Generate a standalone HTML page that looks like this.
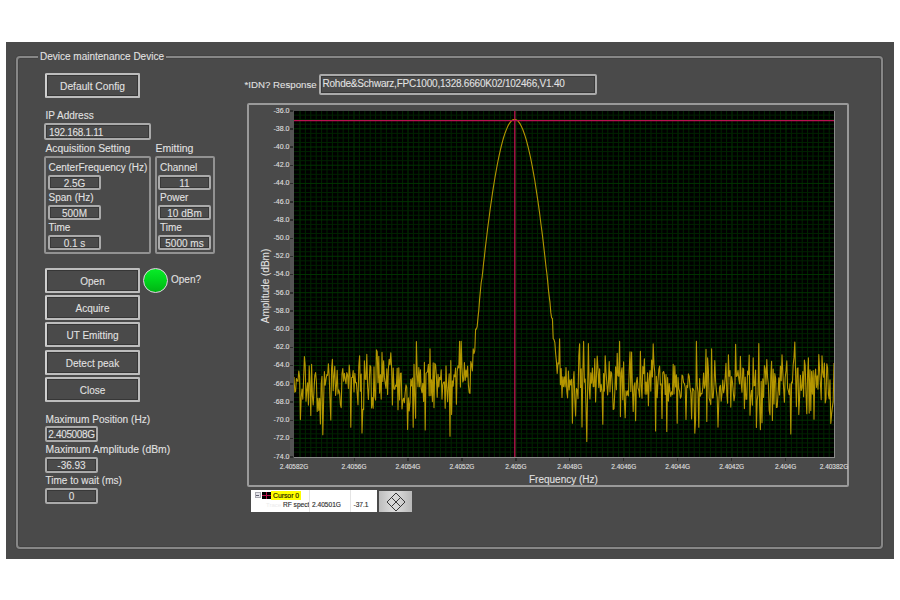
<!DOCTYPE html><html><head><meta charset="utf-8"><style>
*{margin:0;padding:0;box-sizing:border-box}
html,body{width:900px;height:600px;background:#fff;overflow:hidden;position:relative;font-family:"Liberation Sans",sans-serif}
.a{position:absolute}
#panel{left:6px;top:42px;width:888px;height:517px;background:#4a4a4a}
#frame{left:16px;top:56px;width:867px;height:493px;border:2px solid #878787;border-radius:4px;box-shadow:0 0 0 1px #434343,inset 0 0 0 1px #434343}
.t{position:absolute;color:#e2e2e2;font-size:10px;white-space:nowrap;line-height:12px;-webkit-text-stroke:0.08px #e2e2e2}
.btn{position:absolute;border:2px solid #bdbdbd;border-left-color:#cfcfcf;box-shadow:inset 0 0 0 1px #363636;-webkit-text-stroke:0.08px #e2e2e2;color:#e2e2e2;font-size:10px;text-align:center;white-space:nowrap}
.box{position:absolute;border-radius:2px;border:2px solid #aaaaaa;box-shadow:inset 0 0 0 1px #383838;-webkit-text-stroke:0.08px #e2e2e2;color:#e2e2e2;font-size:10px;white-space:nowrap;text-align:center}
.grp{position:absolute;border:2px solid #929292;border-radius:2px}
.yl{position:absolute;color:#dcdcdc;-webkit-text-stroke:0.15px #dcdcdc;font-size:7px;line-height:8px;text-align:right;width:30px;white-space:nowrap}
.xl{position:absolute;color:#dcdcdc;-webkit-text-stroke:0.15px #dcdcdc;font-size:6.5px;line-height:8px;text-align:center;width:40px;white-space:nowrap}
</style></head><body><div id="panel" class="a"></div>
<div id="frame" class="a"></div>
<div class="t" style="left:38px;top:51px;padding:0 2.5px 0 2px;background:#4a4a4a">Device maintenance Device</div>
<div class="btn" style="left:45px;top:73px;width:95px;height:25px;line-height:21px;padding-top:1.2px;font-size:10.25px;border-radius:1.5px">Default Config</div>
<div class="t" style="left:45.5px;top:110.0px;font-size:10px">IP Address</div>
<div class="box" style="left:44px;top:123px;width:107px;height:17px;line-height:13px;text-align:left;padding-left:3px;padding-top:0.8px;font-size:10px;letter-spacing:-0.3px">192.168.1.11</div>
<div class="t" style="left:45.5px;top:143.0px;font-size:10.3px">Acquisition Setting</div>
<div class="grp" style="left:44px;top:156px;width:107px;height:98px"></div>
<div class="t" style="left:48.5px;top:161.5px;font-size:10px">CenterFrequency (Hz)</div>
<div class="box" style="left:48px;top:175px;width:53px;height:15px;line-height:11px;text-align:center;padding-left:0px;padding-top:0.8px;font-size:10px;letter-spacing:0px">2.5G</div>
<div class="t" style="left:48.5px;top:191.5px;font-size:10px">Span (Hz)</div>
<div class="box" style="left:48px;top:205px;width:53px;height:15px;line-height:11px;text-align:center;padding-left:0px;padding-top:0.8px;font-size:10px;letter-spacing:0px">500M</div>
<div class="t" style="left:48.5px;top:222.0px;font-size:10px">Time</div>
<div class="box" style="left:48px;top:235px;width:53px;height:15px;line-height:11px;text-align:center;padding-left:0px;padding-top:0.8px;font-size:10px;letter-spacing:0px">0.1 s</div>
<div class="t" style="left:155.5px;top:142.0px;font-size:10.5px">Emitting</div>
<div class="grp" style="left:155px;top:156px;width:60px;height:98px"></div>
<div class="t" style="left:160px;top:161.5px;font-size:10px">Channel</div>
<div class="box" style="left:158px;top:175px;width:53px;height:15px;line-height:11px;text-align:center;padding-left:0px;padding-top:0.8px;font-size:10px;letter-spacing:0px">11</div>
<div class="t" style="left:160px;top:191.5px;font-size:10px">Power</div>
<div class="box" style="left:158px;top:205px;width:53px;height:15px;line-height:11px;text-align:center;padding-left:0px;padding-top:0.8px;font-size:10px;letter-spacing:0px">10 dBm</div>
<div class="t" style="left:160px;top:222.0px;font-size:10px">Time</div>
<div class="box" style="left:158px;top:235px;width:53px;height:15px;line-height:11px;text-align:center;padding-left:0px;padding-top:0.8px;font-size:10px;letter-spacing:0px">5000 ms</div>
<div class="btn" style="left:45px;top:267.5px;width:95px;height:25px;line-height:21px;padding-top:1.2px;font-size:10px;border-radius:1.5px">Open</div>
<div class="btn" style="left:45px;top:294.9px;width:95px;height:25px;line-height:21px;padding-top:1.2px;font-size:10px;border-radius:1.5px">Acquire</div>
<div class="btn" style="left:45px;top:322.3px;width:95px;height:25px;line-height:21px;padding-top:1.2px;font-size:10px;border-radius:1.5px">UT Emitting</div>
<div class="btn" style="left:45px;top:349.7px;width:95px;height:25px;line-height:21px;padding-top:1.2px;font-size:10px;border-radius:1.5px">Detect peak</div>
<div class="btn" style="left:45px;top:377.1px;width:95px;height:25px;line-height:21px;padding-top:1.2px;font-size:10px;border-radius:1.5px">Close</div>
<div class="a" style="left:142.5px;top:268px;width:25px;height:25px;border-radius:50%;border:1.5px solid #e4d4e4;background:linear-gradient(180deg,#08ec28 0%,#00d41c 50%,#00b414 100%)"></div>
<div class="t" style="left:171px;top:273.5px;font-size:10px">Open?</div>
<div class="t" style="left:45.5px;top:413.5px;font-size:10.15px">Maximum Position (Hz)</div>
<div class="box" style="left:45px;top:426px;width:53px;height:16px;line-height:12px;text-align:center;padding-left:0px;padding-top:0.8px;font-size:10px;letter-spacing:-0.35px">2.405008G</div>
<div class="t" style="left:45.5px;top:444.0px;font-size:10.4px">Maximum Amplitude (dBm)</div>
<div class="box" style="left:45px;top:457px;width:53px;height:16px;line-height:12px;text-align:center;padding-left:0px;padding-top:0.8px;font-size:10px;letter-spacing:0px">-36.93</div>
<div class="t" style="left:45.5px;top:474.5px;font-size:10px">Time to wait (ms)</div>
<div class="box" style="left:45px;top:488px;width:53px;height:16px;line-height:12px;text-align:center;padding-left:0px;padding-top:0.8px;font-size:10px;letter-spacing:0px">0</div>
<div class="t" style="left:244.5px;top:78.5px;font-size:9.7px">*IDN? Response</div>
<div class="box" style="left:319px;top:74px;width:278px;height:21px;line-height:14px;text-align:left;padding-left:1.5px;padding-top:0.8px;font-size:10px;letter-spacing:-0.22px">Rohde&amp;Schwarz,FPC1000,1328.6660K02/102466,V1.40</div>
<div class="a" style="left:247px;top:103px;width:602px;height:384px;border:2px solid #9a9a9a;border-radius:2px"></div>
<svg class="a" style="left:294.0px;top:110.5px" width="540.0" height="346.0" viewBox="294.0 110.5 540.0 346.0"><rect x="294.0" y="110.5" width="540.0" height="346.0" fill="#000"/><line x1="300.00" y1="110.5" x2="300.00" y2="456.5" stroke="#003600" stroke-width="1"/><line x1="305.40" y1="110.5" x2="305.40" y2="456.5" stroke="#002600" stroke-width="1"/><line x1="310.80" y1="110.5" x2="310.80" y2="456.5" stroke="#002600" stroke-width="1"/><line x1="316.20" y1="110.5" x2="316.20" y2="456.5" stroke="#002600" stroke-width="1"/><line x1="321.60" y1="110.5" x2="321.60" y2="456.5" stroke="#002600" stroke-width="1"/><line x1="327.00" y1="110.5" x2="327.00" y2="456.5" stroke="#002600" stroke-width="1"/><line x1="332.40" y1="110.5" x2="332.40" y2="456.5" stroke="#002600" stroke-width="1"/><line x1="337.80" y1="110.5" x2="337.80" y2="456.5" stroke="#002600" stroke-width="1"/><line x1="343.20" y1="110.5" x2="343.20" y2="456.5" stroke="#002600" stroke-width="1"/><line x1="348.60" y1="110.5" x2="348.60" y2="456.5" stroke="#002600" stroke-width="1"/><line x1="354.00" y1="110.5" x2="354.00" y2="456.5" stroke="#003600" stroke-width="1"/><line x1="359.40" y1="110.5" x2="359.40" y2="456.5" stroke="#002600" stroke-width="1"/><line x1="364.80" y1="110.5" x2="364.80" y2="456.5" stroke="#002600" stroke-width="1"/><line x1="370.20" y1="110.5" x2="370.20" y2="456.5" stroke="#002600" stroke-width="1"/><line x1="375.60" y1="110.5" x2="375.60" y2="456.5" stroke="#002600" stroke-width="1"/><line x1="381.00" y1="110.5" x2="381.00" y2="456.5" stroke="#002600" stroke-width="1"/><line x1="386.40" y1="110.5" x2="386.40" y2="456.5" stroke="#002600" stroke-width="1"/><line x1="391.80" y1="110.5" x2="391.80" y2="456.5" stroke="#002600" stroke-width="1"/><line x1="397.20" y1="110.5" x2="397.20" y2="456.5" stroke="#002600" stroke-width="1"/><line x1="402.60" y1="110.5" x2="402.60" y2="456.5" stroke="#002600" stroke-width="1"/><line x1="408.00" y1="110.5" x2="408.00" y2="456.5" stroke="#003600" stroke-width="1"/><line x1="413.40" y1="110.5" x2="413.40" y2="456.5" stroke="#002600" stroke-width="1"/><line x1="418.80" y1="110.5" x2="418.80" y2="456.5" stroke="#002600" stroke-width="1"/><line x1="424.20" y1="110.5" x2="424.20" y2="456.5" stroke="#002600" stroke-width="1"/><line x1="429.60" y1="110.5" x2="429.60" y2="456.5" stroke="#002600" stroke-width="1"/><line x1="435.00" y1="110.5" x2="435.00" y2="456.5" stroke="#002600" stroke-width="1"/><line x1="440.40" y1="110.5" x2="440.40" y2="456.5" stroke="#002600" stroke-width="1"/><line x1="445.80" y1="110.5" x2="445.80" y2="456.5" stroke="#002600" stroke-width="1"/><line x1="451.20" y1="110.5" x2="451.20" y2="456.5" stroke="#002600" stroke-width="1"/><line x1="456.60" y1="110.5" x2="456.60" y2="456.5" stroke="#002600" stroke-width="1"/><line x1="462.00" y1="110.5" x2="462.00" y2="456.5" stroke="#003600" stroke-width="1"/><line x1="467.40" y1="110.5" x2="467.40" y2="456.5" stroke="#002600" stroke-width="1"/><line x1="472.80" y1="110.5" x2="472.80" y2="456.5" stroke="#002600" stroke-width="1"/><line x1="478.20" y1="110.5" x2="478.20" y2="456.5" stroke="#002600" stroke-width="1"/><line x1="483.60" y1="110.5" x2="483.60" y2="456.5" stroke="#002600" stroke-width="1"/><line x1="489.00" y1="110.5" x2="489.00" y2="456.5" stroke="#002600" stroke-width="1"/><line x1="494.40" y1="110.5" x2="494.40" y2="456.5" stroke="#002600" stroke-width="1"/><line x1="499.80" y1="110.5" x2="499.80" y2="456.5" stroke="#002600" stroke-width="1"/><line x1="505.20" y1="110.5" x2="505.20" y2="456.5" stroke="#002600" stroke-width="1"/><line x1="510.60" y1="110.5" x2="510.60" y2="456.5" stroke="#002600" stroke-width="1"/><line x1="516.00" y1="110.5" x2="516.00" y2="456.5" stroke="#003600" stroke-width="1"/><line x1="521.40" y1="110.5" x2="521.40" y2="456.5" stroke="#002600" stroke-width="1"/><line x1="526.80" y1="110.5" x2="526.80" y2="456.5" stroke="#002600" stroke-width="1"/><line x1="532.20" y1="110.5" x2="532.20" y2="456.5" stroke="#002600" stroke-width="1"/><line x1="537.60" y1="110.5" x2="537.60" y2="456.5" stroke="#002600" stroke-width="1"/><line x1="543.00" y1="110.5" x2="543.00" y2="456.5" stroke="#002600" stroke-width="1"/><line x1="548.40" y1="110.5" x2="548.40" y2="456.5" stroke="#002600" stroke-width="1"/><line x1="553.80" y1="110.5" x2="553.80" y2="456.5" stroke="#002600" stroke-width="1"/><line x1="559.20" y1="110.5" x2="559.20" y2="456.5" stroke="#002600" stroke-width="1"/><line x1="564.60" y1="110.5" x2="564.60" y2="456.5" stroke="#002600" stroke-width="1"/><line x1="570.00" y1="110.5" x2="570.00" y2="456.5" stroke="#003600" stroke-width="1"/><line x1="575.40" y1="110.5" x2="575.40" y2="456.5" stroke="#002600" stroke-width="1"/><line x1="580.80" y1="110.5" x2="580.80" y2="456.5" stroke="#002600" stroke-width="1"/><line x1="586.20" y1="110.5" x2="586.20" y2="456.5" stroke="#002600" stroke-width="1"/><line x1="591.60" y1="110.5" x2="591.60" y2="456.5" stroke="#002600" stroke-width="1"/><line x1="597.00" y1="110.5" x2="597.00" y2="456.5" stroke="#002600" stroke-width="1"/><line x1="602.40" y1="110.5" x2="602.40" y2="456.5" stroke="#002600" stroke-width="1"/><line x1="607.80" y1="110.5" x2="607.80" y2="456.5" stroke="#002600" stroke-width="1"/><line x1="613.20" y1="110.5" x2="613.20" y2="456.5" stroke="#002600" stroke-width="1"/><line x1="618.60" y1="110.5" x2="618.60" y2="456.5" stroke="#002600" stroke-width="1"/><line x1="624.00" y1="110.5" x2="624.00" y2="456.5" stroke="#003600" stroke-width="1"/><line x1="629.40" y1="110.5" x2="629.40" y2="456.5" stroke="#002600" stroke-width="1"/><line x1="634.80" y1="110.5" x2="634.80" y2="456.5" stroke="#002600" stroke-width="1"/><line x1="640.20" y1="110.5" x2="640.20" y2="456.5" stroke="#002600" stroke-width="1"/><line x1="645.60" y1="110.5" x2="645.60" y2="456.5" stroke="#002600" stroke-width="1"/><line x1="651.00" y1="110.5" x2="651.00" y2="456.5" stroke="#002600" stroke-width="1"/><line x1="656.40" y1="110.5" x2="656.40" y2="456.5" stroke="#002600" stroke-width="1"/><line x1="661.80" y1="110.5" x2="661.80" y2="456.5" stroke="#002600" stroke-width="1"/><line x1="667.20" y1="110.5" x2="667.20" y2="456.5" stroke="#002600" stroke-width="1"/><line x1="672.60" y1="110.5" x2="672.60" y2="456.5" stroke="#002600" stroke-width="1"/><line x1="678.00" y1="110.5" x2="678.00" y2="456.5" stroke="#003600" stroke-width="1"/><line x1="683.40" y1="110.5" x2="683.40" y2="456.5" stroke="#002600" stroke-width="1"/><line x1="688.80" y1="110.5" x2="688.80" y2="456.5" stroke="#002600" stroke-width="1"/><line x1="694.20" y1="110.5" x2="694.20" y2="456.5" stroke="#002600" stroke-width="1"/><line x1="699.60" y1="110.5" x2="699.60" y2="456.5" stroke="#002600" stroke-width="1"/><line x1="705.00" y1="110.5" x2="705.00" y2="456.5" stroke="#002600" stroke-width="1"/><line x1="710.40" y1="110.5" x2="710.40" y2="456.5" stroke="#002600" stroke-width="1"/><line x1="715.80" y1="110.5" x2="715.80" y2="456.5" stroke="#002600" stroke-width="1"/><line x1="721.20" y1="110.5" x2="721.20" y2="456.5" stroke="#002600" stroke-width="1"/><line x1="726.60" y1="110.5" x2="726.60" y2="456.5" stroke="#002600" stroke-width="1"/><line x1="732.00" y1="110.5" x2="732.00" y2="456.5" stroke="#003600" stroke-width="1"/><line x1="737.40" y1="110.5" x2="737.40" y2="456.5" stroke="#002600" stroke-width="1"/><line x1="742.80" y1="110.5" x2="742.80" y2="456.5" stroke="#002600" stroke-width="1"/><line x1="748.20" y1="110.5" x2="748.20" y2="456.5" stroke="#002600" stroke-width="1"/><line x1="753.60" y1="110.5" x2="753.60" y2="456.5" stroke="#002600" stroke-width="1"/><line x1="759.00" y1="110.5" x2="759.00" y2="456.5" stroke="#002600" stroke-width="1"/><line x1="764.40" y1="110.5" x2="764.40" y2="456.5" stroke="#002600" stroke-width="1"/><line x1="769.80" y1="110.5" x2="769.80" y2="456.5" stroke="#002600" stroke-width="1"/><line x1="775.20" y1="110.5" x2="775.20" y2="456.5" stroke="#002600" stroke-width="1"/><line x1="780.60" y1="110.5" x2="780.60" y2="456.5" stroke="#002600" stroke-width="1"/><line x1="786.00" y1="110.5" x2="786.00" y2="456.5" stroke="#003600" stroke-width="1"/><line x1="791.40" y1="110.5" x2="791.40" y2="456.5" stroke="#002600" stroke-width="1"/><line x1="796.80" y1="110.5" x2="796.80" y2="456.5" stroke="#002600" stroke-width="1"/><line x1="802.20" y1="110.5" x2="802.20" y2="456.5" stroke="#002600" stroke-width="1"/><line x1="807.60" y1="110.5" x2="807.60" y2="456.5" stroke="#002600" stroke-width="1"/><line x1="813.00" y1="110.5" x2="813.00" y2="456.5" stroke="#002600" stroke-width="1"/><line x1="818.40" y1="110.5" x2="818.40" y2="456.5" stroke="#002600" stroke-width="1"/><line x1="823.80" y1="110.5" x2="823.80" y2="456.5" stroke="#002600" stroke-width="1"/><line x1="829.20" y1="110.5" x2="829.20" y2="456.5" stroke="#002600" stroke-width="1"/><line x1="834.60" y1="110.5" x2="834.60" y2="456.5" stroke="#002600" stroke-width="1"/><line x1="294.0" y1="114.65" x2="834.0" y2="114.65" stroke="#002300" stroke-width="1"/><line x1="294.0" y1="119.21" x2="834.0" y2="119.21" stroke="#002300" stroke-width="1"/><line x1="294.0" y1="123.76" x2="834.0" y2="123.76" stroke="#002300" stroke-width="1"/><line x1="294.0" y1="128.31" x2="834.0" y2="128.31" stroke="#003400" stroke-width="1"/><line x1="294.0" y1="132.86" x2="834.0" y2="132.86" stroke="#002300" stroke-width="1"/><line x1="294.0" y1="137.42" x2="834.0" y2="137.42" stroke="#002300" stroke-width="1"/><line x1="294.0" y1="141.97" x2="834.0" y2="141.97" stroke="#002300" stroke-width="1"/><line x1="294.0" y1="146.52" x2="834.0" y2="146.52" stroke="#003400" stroke-width="1"/><line x1="294.0" y1="151.07" x2="834.0" y2="151.07" stroke="#002300" stroke-width="1"/><line x1="294.0" y1="155.63" x2="834.0" y2="155.63" stroke="#002300" stroke-width="1"/><line x1="294.0" y1="160.18" x2="834.0" y2="160.18" stroke="#002300" stroke-width="1"/><line x1="294.0" y1="164.73" x2="834.0" y2="164.73" stroke="#003400" stroke-width="1"/><line x1="294.0" y1="169.28" x2="834.0" y2="169.28" stroke="#002300" stroke-width="1"/><line x1="294.0" y1="173.84" x2="834.0" y2="173.84" stroke="#002300" stroke-width="1"/><line x1="294.0" y1="178.39" x2="834.0" y2="178.39" stroke="#002300" stroke-width="1"/><line x1="294.0" y1="182.94" x2="834.0" y2="182.94" stroke="#003400" stroke-width="1"/><line x1="294.0" y1="187.49" x2="834.0" y2="187.49" stroke="#002300" stroke-width="1"/><line x1="294.0" y1="192.05" x2="834.0" y2="192.05" stroke="#002300" stroke-width="1"/><line x1="294.0" y1="196.60" x2="834.0" y2="196.60" stroke="#002300" stroke-width="1"/><line x1="294.0" y1="201.15" x2="834.0" y2="201.15" stroke="#003400" stroke-width="1"/><line x1="294.0" y1="205.71" x2="834.0" y2="205.71" stroke="#002300" stroke-width="1"/><line x1="294.0" y1="210.26" x2="834.0" y2="210.26" stroke="#002300" stroke-width="1"/><line x1="294.0" y1="214.81" x2="834.0" y2="214.81" stroke="#002300" stroke-width="1"/><line x1="294.0" y1="219.36" x2="834.0" y2="219.36" stroke="#003400" stroke-width="1"/><line x1="294.0" y1="223.92" x2="834.0" y2="223.92" stroke="#002300" stroke-width="1"/><line x1="294.0" y1="228.47" x2="834.0" y2="228.47" stroke="#002300" stroke-width="1"/><line x1="294.0" y1="233.02" x2="834.0" y2="233.02" stroke="#002300" stroke-width="1"/><line x1="294.0" y1="237.57" x2="834.0" y2="237.57" stroke="#003400" stroke-width="1"/><line x1="294.0" y1="242.13" x2="834.0" y2="242.13" stroke="#002300" stroke-width="1"/><line x1="294.0" y1="246.68" x2="834.0" y2="246.68" stroke="#002300" stroke-width="1"/><line x1="294.0" y1="251.23" x2="834.0" y2="251.23" stroke="#002300" stroke-width="1"/><line x1="294.0" y1="255.78" x2="834.0" y2="255.78" stroke="#003400" stroke-width="1"/><line x1="294.0" y1="260.34" x2="834.0" y2="260.34" stroke="#002300" stroke-width="1"/><line x1="294.0" y1="264.89" x2="834.0" y2="264.89" stroke="#002300" stroke-width="1"/><line x1="294.0" y1="269.44" x2="834.0" y2="269.44" stroke="#002300" stroke-width="1"/><line x1="294.0" y1="273.99" x2="834.0" y2="273.99" stroke="#003400" stroke-width="1"/><line x1="294.0" y1="278.55" x2="834.0" y2="278.55" stroke="#002300" stroke-width="1"/><line x1="294.0" y1="283.10" x2="834.0" y2="283.10" stroke="#002300" stroke-width="1"/><line x1="294.0" y1="287.65" x2="834.0" y2="287.65" stroke="#002300" stroke-width="1"/><line x1="294.0" y1="292.21" x2="834.0" y2="292.21" stroke="#003400" stroke-width="1"/><line x1="294.0" y1="296.76" x2="834.0" y2="296.76" stroke="#002300" stroke-width="1"/><line x1="294.0" y1="301.31" x2="834.0" y2="301.31" stroke="#002300" stroke-width="1"/><line x1="294.0" y1="305.86" x2="834.0" y2="305.86" stroke="#002300" stroke-width="1"/><line x1="294.0" y1="310.42" x2="834.0" y2="310.42" stroke="#003400" stroke-width="1"/><line x1="294.0" y1="314.97" x2="834.0" y2="314.97" stroke="#002300" stroke-width="1"/><line x1="294.0" y1="319.52" x2="834.0" y2="319.52" stroke="#002300" stroke-width="1"/><line x1="294.0" y1="324.07" x2="834.0" y2="324.07" stroke="#002300" stroke-width="1"/><line x1="294.0" y1="328.63" x2="834.0" y2="328.63" stroke="#003400" stroke-width="1"/><line x1="294.0" y1="333.18" x2="834.0" y2="333.18" stroke="#002300" stroke-width="1"/><line x1="294.0" y1="337.73" x2="834.0" y2="337.73" stroke="#002300" stroke-width="1"/><line x1="294.0" y1="342.28" x2="834.0" y2="342.28" stroke="#002300" stroke-width="1"/><line x1="294.0" y1="346.84" x2="834.0" y2="346.84" stroke="#003400" stroke-width="1"/><line x1="294.0" y1="351.39" x2="834.0" y2="351.39" stroke="#002300" stroke-width="1"/><line x1="294.0" y1="355.94" x2="834.0" y2="355.94" stroke="#002300" stroke-width="1"/><line x1="294.0" y1="360.49" x2="834.0" y2="360.49" stroke="#002300" stroke-width="1"/><line x1="294.0" y1="365.05" x2="834.0" y2="365.05" stroke="#003400" stroke-width="1"/><line x1="294.0" y1="369.60" x2="834.0" y2="369.60" stroke="#002300" stroke-width="1"/><line x1="294.0" y1="374.15" x2="834.0" y2="374.15" stroke="#002300" stroke-width="1"/><line x1="294.0" y1="378.71" x2="834.0" y2="378.71" stroke="#002300" stroke-width="1"/><line x1="294.0" y1="383.26" x2="834.0" y2="383.26" stroke="#003400" stroke-width="1"/><line x1="294.0" y1="387.81" x2="834.0" y2="387.81" stroke="#002300" stroke-width="1"/><line x1="294.0" y1="392.36" x2="834.0" y2="392.36" stroke="#002300" stroke-width="1"/><line x1="294.0" y1="396.92" x2="834.0" y2="396.92" stroke="#002300" stroke-width="1"/><line x1="294.0" y1="401.47" x2="834.0" y2="401.47" stroke="#003400" stroke-width="1"/><line x1="294.0" y1="406.02" x2="834.0" y2="406.02" stroke="#002300" stroke-width="1"/><line x1="294.0" y1="410.57" x2="834.0" y2="410.57" stroke="#002300" stroke-width="1"/><line x1="294.0" y1="415.13" x2="834.0" y2="415.13" stroke="#002300" stroke-width="1"/><line x1="294.0" y1="419.68" x2="834.0" y2="419.68" stroke="#003400" stroke-width="1"/><line x1="294.0" y1="424.23" x2="834.0" y2="424.23" stroke="#002300" stroke-width="1"/><line x1="294.0" y1="428.78" x2="834.0" y2="428.78" stroke="#002300" stroke-width="1"/><line x1="294.0" y1="433.34" x2="834.0" y2="433.34" stroke="#002300" stroke-width="1"/><line x1="294.0" y1="437.89" x2="834.0" y2="437.89" stroke="#003400" stroke-width="1"/><line x1="294.0" y1="442.44" x2="834.0" y2="442.44" stroke="#002300" stroke-width="1"/><line x1="294.0" y1="446.99" x2="834.0" y2="446.99" stroke="#002300" stroke-width="1"/><line x1="294.0" y1="451.55" x2="834.0" y2="451.55" stroke="#002300" stroke-width="1"/><polyline points="294.0,376.4 294.8,391.7 295.6,390.9 296.4,378.0 297.2,380.0 298.0,380.8 298.8,370.5 299.6,376.4 300.4,419.1 301.2,396.7 302.0,388.6 302.8,398.7 303.6,379.5 304.4,356.0 305.2,364.8 306.0,400.7 306.8,389.4 307.6,382.2 308.4,404.6 309.2,365.4 310.0,383.9 310.8,414.9 311.6,363.8 312.4,395.6 313.2,404.5 314.0,390.0 314.8,375.2 315.6,372.1 316.4,381.0 317.2,411.0 318.0,397.7 318.8,410.0 319.6,397.7 320.4,423.5 321.2,383.6 322.0,375.8 322.8,434.2 323.6,401.2 324.4,371.1 325.2,384.7 326.0,379.2 326.8,374.1 327.6,374.8 328.4,363.2 329.2,375.8 330.0,399.1 330.8,419.5 331.6,368.1 332.4,358.8 333.2,390.1 334.0,375.1 334.8,365.8 335.6,394.9 336.4,385.6 337.2,369.8 338.0,393.5 338.8,389.3 339.6,392.4 340.4,404.1 341.2,407.1 342.0,373.4 342.8,368.1 343.6,380.8 344.4,372.9 345.2,378.6 346.0,383.1 346.8,372.1 347.6,374.5 348.4,387.9 349.2,364.5 350.0,374.9 350.8,426.8 351.6,377.1 352.4,377.0 353.2,370.1 354.0,391.4 354.8,372.9 355.6,382.1 356.4,382.0 357.2,392.9 358.0,404.3 358.8,365.8 359.6,355.2 360.4,390.8 361.2,373.5 362.0,432.5 362.8,408.9 363.6,409.1 364.4,360.2 365.2,378.8 366.0,379.0 366.8,353.9 367.6,386.2 368.4,399.0 369.2,382.3 370.0,364.9 370.8,366.3 371.6,407.4 372.4,397.1 373.2,407.7 374.0,366.2 374.8,395.6 375.6,399.6 376.4,349.4 377.2,351.2 378.0,382.1 378.8,355.7 379.6,392.6 380.4,374.0 381.2,398.6 382.0,351.9 382.8,381.0 383.6,360.4 384.4,376.9 385.2,382.7 386.0,387.9 386.8,368.2 387.6,394.0 388.4,367.8 389.2,358.9 390.0,364.3 390.8,352.4 391.6,366.6 392.4,404.5 393.2,367.5 394.0,388.5 394.8,388.8 395.6,384.6 396.4,385.9 397.2,367.8 398.0,409.2 398.8,367.3 399.6,399.4 400.4,372.9 401.2,372.5 402.0,408.4 402.8,400.2 403.6,397.7 404.4,402.3 405.2,392.0 406.0,384.3 406.8,387.2 407.6,428.9 408.4,397.3 409.2,410.4 410.0,402.0 410.8,378.8 411.6,385.4 412.4,377.6 413.2,426.8 414.0,363.9 414.8,396.5 415.6,417.7 416.4,341.0 417.2,373.6 418.0,386.3 418.8,367.1 419.6,386.3 420.4,369.3 421.2,388.0 422.0,392.2 422.8,382.8 423.6,400.9 424.4,361.9 425.2,429.4 426.0,372.9 426.8,372.2 427.6,370.8 428.4,363.9 429.2,395.3 430.0,348.2 430.8,395.1 431.6,379.4 432.4,401.1 433.2,362.2 434.0,407.1 434.8,362.9 435.6,364.4 436.4,375.7 437.2,396.7 438.0,373.7 438.8,386.4 439.6,376.8 440.4,379.3 441.2,369.2 442.0,398.6 442.8,384.4 443.6,381.7 444.4,381.4 445.2,407.7 446.0,365.2 446.8,387.4 447.6,401.1 448.4,384.6 449.2,373.2 450.0,435.7 450.8,360.1 451.6,414.0 452.4,380.3 453.2,385.8 454.0,374.3 454.8,376.2 455.6,367.5 456.4,403.7 457.2,371.0 458.0,365.2 458.8,367.4 459.6,340.8 460.4,386.6 461.2,340.7 462.0,367.2 462.8,381.5 463.6,379.3 464.4,362.0 465.2,379.9 466.0,369.6 466.8,376.6 467.6,365.5 468.4,384.6 469.2,391.9 470.0,392.9 470.8,361.0 471.6,364.1 472.4,370.4 473.2,348.3 474.0,352.9 474.8,350.0 475.6,328.5 476.4,328.6 477.2,326.0 478.0,316.9 478.8,309.6 479.6,298.9 480.4,290.4 481.2,282.0 482.0,277.5 482.8,270.5 483.6,262.5 484.4,256.1 485.2,248.4 486.0,241.7 486.8,235.2 487.6,228.3 488.4,222.3 489.2,216.3 490.0,210.0 490.8,204.2 491.6,198.8 492.4,193.2 493.2,187.9 494.0,183.0 494.8,178.0 495.6,173.3 496.4,169.0 497.2,164.6 498.0,160.5 498.8,156.6 499.6,152.9 500.4,149.4 501.2,146.0 502.0,142.9 502.8,139.9 503.6,137.0 504.4,134.6 505.2,132.2 506.0,130.1 506.8,128.1 507.6,126.3 508.4,124.6 509.2,123.3 510.0,122.1 510.8,121.1 511.6,120.3 512.4,119.6 513.2,119.2 514.0,119.0 514.8,119.0 515.6,119.1 516.4,119.4 517.2,119.9 518.0,120.6 518.8,121.6 519.6,122.6 520.4,123.9 521.2,125.5 522.0,127.2 522.8,129.0 523.6,131.2 524.4,133.5 525.2,135.9 526.0,138.5 526.8,141.4 527.6,144.5 528.4,147.6 529.2,151.1 530.0,154.7 530.8,158.4 531.6,162.5 532.4,166.7 533.2,171.1 534.0,175.6 534.8,180.0 535.6,185.4 536.4,190.7 537.2,195.8 538.0,201.2 538.8,206.9 539.6,212.7 540.4,219.2 541.2,225.5 542.0,231.4 542.8,237.9 543.6,244.8 544.4,251.9 545.2,258.9 546.0,266.5 546.8,272.5 547.6,279.9 548.4,288.9 549.2,295.9 550.0,302.1 550.8,311.9 551.6,317.5 552.4,317.7 553.2,338.2 554.0,339.1 554.8,341.8 555.6,352.6 556.4,360.6 557.2,373.0 558.0,362.4 558.8,363.3 559.6,338.3 560.4,384.2 561.2,368.1 562.0,397.0 562.8,376.3 563.6,386.2 564.4,376.3 565.2,386.4 566.0,367.1 566.8,391.0 567.6,397.4 568.4,370.5 569.2,389.5 570.0,379.4 570.8,384.4 571.6,378.8 572.4,422.7 573.2,382.0 574.0,371.1 574.8,398.5 575.6,415.4 576.4,387.9 577.2,389.5 578.0,398.1 578.8,355.5 579.6,343.4 580.4,386.9 581.2,368.2 582.0,426.4 582.8,372.9 583.6,340.9 584.4,381.7 585.2,378.6 586.0,406.0 586.8,441.0 587.6,389.9 588.4,343.0 589.2,387.1 590.0,398.4 590.8,372.3 591.6,382.8 592.4,367.6 593.2,386.3 594.0,385.9 594.8,358.0 595.6,401.5 596.4,376.7 597.2,355.5 598.0,368.2 598.8,387.0 599.6,368.3 600.4,391.2 601.2,384.1 602.0,391.6 602.8,423.8 603.6,373.1 604.4,390.6 605.2,355.3 606.0,371.2 606.8,382.0 607.6,394.5 608.4,382.9 609.2,361.0 610.0,391.3 610.8,371.1 611.6,372.5 612.4,386.2 613.2,409.0 614.0,408.3 614.8,391.3 615.6,366.2 616.4,389.2 617.2,352.7 618.0,375.1 618.8,375.7 619.6,340.9 620.4,416.1 621.2,372.7 622.0,367.3 622.8,399.3 623.6,361.4 624.4,400.4 625.2,417.2 626.0,390.3 626.8,394.8 627.6,390.3 628.4,395.4 629.2,369.8 630.0,351.2 630.8,390.9 631.6,351.5 632.4,387.4 633.2,410.9 634.0,386.1 634.8,382.3 635.6,420.2 636.4,381.5 637.2,376.8 638.0,387.5 638.8,390.0 639.6,396.7 640.4,350.7 641.2,384.8 642.0,397.7 642.8,366.1 643.6,373.3 644.4,358.4 645.2,393.6 646.0,381.5 646.8,393.6 647.6,372.2 648.4,405.3 649.2,379.6 650.0,370.1 650.8,390.6 651.6,359.6 652.4,376.5 653.2,343.4 654.0,364.3 654.8,372.0 655.6,430.5 656.4,375.7 657.2,397.1 658.0,381.2 658.8,369.0 659.6,365.5 660.4,384.4 661.2,383.4 662.0,418.0 662.8,372.3 663.6,371.0 664.4,374.2 665.2,394.0 666.0,374.0 666.8,431.0 667.6,377.1 668.4,400.6 669.2,383.0 670.0,390.9 670.8,396.0 671.6,391.2 672.4,394.2 673.2,363.7 674.0,393.5 674.8,365.2 675.6,386.4 676.4,374.3 677.2,422.7 678.0,377.0 678.8,388.2 679.6,390.7 680.4,397.7 681.2,396.1 682.0,374.6 682.8,375.6 683.6,382.2 684.4,383.2 685.2,386.8 686.0,419.0 686.8,385.0 687.6,386.9 688.4,373.4 689.2,375.6 690.0,386.9 690.8,392.5 691.6,418.4 692.4,387.7 693.2,388.7 694.0,390.5 694.8,432.6 695.6,418.6 696.4,340.9 697.2,384.8 698.0,392.0 698.8,426.7 699.6,378.1 700.4,395.6 701.2,393.0 702.0,393.3 702.8,387.1 703.6,372.5 704.4,387.8 705.2,383.8 706.0,348.8 706.8,421.0 707.6,357.2 708.4,369.3 709.2,397.8 710.0,400.5 710.8,404.1 711.6,348.2 712.4,397.4 713.2,397.5 714.0,384.0 714.8,360.0 715.6,380.6 716.4,390.4 717.2,396.9 718.0,426.6 718.8,401.6 719.6,386.7 720.4,384.8 721.2,400.6 722.0,393.0 722.8,379.5 723.6,392.3 724.4,387.6 725.2,376.4 726.0,362.9 726.8,393.8 727.6,402.6 728.4,354.2 729.2,375.8 730.0,370.1 730.8,406.6 731.6,376.1 732.4,380.9 733.2,390.4 734.0,400.3 734.8,394.5 735.6,343.8 736.4,375.9 737.2,375.4 738.0,369.9 738.8,378.3 739.6,383.4 740.4,355.9 741.2,382.6 742.0,391.8 742.8,367.6 743.6,368.5 744.4,408.1 745.2,376.6 746.0,398.8 746.8,398.8 747.6,370.6 748.4,374.3 749.2,354.6 750.0,414.7 750.8,395.9 751.6,389.7 752.4,404.6 753.2,357.3 754.0,385.4 754.8,384.9 755.6,369.5 756.4,426.9 757.2,399.4 758.0,393.8 758.8,343.0 759.6,404.4 760.4,429.1 761.2,380.9 762.0,422.2 762.8,378.4 763.6,397.0 764.4,365.0 765.2,368.6 766.0,383.8 766.8,359.0 767.6,377.1 768.4,384.2 769.2,409.8 770.0,414.4 770.8,375.1 771.6,360.8 772.4,420.0 773.2,368.5 774.0,403.5 774.8,373.0 775.6,377.6 776.4,407.0 777.2,406.8 778.0,393.3 778.8,377.2 779.6,394.5 780.4,365.5 781.2,380.3 782.0,354.4 782.8,371.6 783.6,387.1 784.4,401.8 785.2,377.0 786.0,370.4 786.8,360.4 787.6,387.5 788.4,390.3 789.2,394.1 790.0,383.3 790.8,433.4 791.6,381.5 792.4,382.5 793.2,364.3 794.0,356.9 794.8,341.6 795.6,373.0 796.4,406.1 797.2,368.1 798.0,367.4 798.8,414.0 799.6,396.8 800.4,374.8 801.2,390.0 802.0,387.6 802.8,371.0 803.6,396.2 804.4,359.5 805.2,365.2 806.0,393.1 806.8,413.3 807.6,374.3 808.4,357.2 809.2,412.6 810.0,369.4 810.8,409.9 811.6,370.9 812.4,393.6 813.2,370.0 814.0,418.7 814.8,376.0 815.6,368.6 816.4,387.0 817.2,375.4 818.0,388.6 818.8,354.0 819.6,370.5 820.4,382.7 821.2,399.2 822.0,355.2 822.8,371.6 823.6,376.8 824.4,362.6 825.2,402.5 826.0,398.3 826.8,363.2 827.6,367.3 828.4,393.8 829.2,398.5 830.0,379.4 830.8,423.0 831.6,413.7 832.4,406.8 833.2,401.1 834.0,362.5" fill="none" stroke="#b49600" stroke-width="1.1" stroke-linejoin="round"/><line x1="514.8" y1="110.5" x2="514.8" y2="456.5" stroke="#b8124f" stroke-width="1.3"/><line x1="294.0" y1="120.2" x2="834.0" y2="120.2" stroke="#b8124f" stroke-width="1.3"/></svg>
<div class="a" style="left:834.0px;top:110.5px;width:1px;height:347.0px;background:#8a8a8a"></div>
<div class="a" style="left:294.0px;top:456.5px;width:541.0px;height:1px;background:#8a8a8a"></div>
<div class="a" style="left:290px;top:110.5px;width:4px;height:346.0px;background:#535353"></div>
<div class="yl" style="left:259.5px;top:106.5px">-36.0</div>
<div class="a" style="left:290px;top:110.0px;width:3px;height:1.5px;background:#2c2c2c"></div>
<div class="yl" style="left:259.5px;top:124.7px">-38.0</div>
<div class="a" style="left:290px;top:128.2px;width:3px;height:1.5px;background:#2c2c2c"></div>
<div class="yl" style="left:259.5px;top:142.9px">-40.0</div>
<div class="a" style="left:290px;top:146.4px;width:3px;height:1.5px;background:#2c2c2c"></div>
<div class="yl" style="left:259.5px;top:161.1px">-42.0</div>
<div class="a" style="left:290px;top:164.6px;width:3px;height:1.5px;background:#2c2c2c"></div>
<div class="yl" style="left:259.5px;top:179.3px">-44.0</div>
<div class="a" style="left:290px;top:182.8px;width:3px;height:1.5px;background:#2c2c2c"></div>
<div class="yl" style="left:259.5px;top:197.6px">-46.0</div>
<div class="a" style="left:290px;top:201.1px;width:3px;height:1.5px;background:#2c2c2c"></div>
<div class="yl" style="left:259.5px;top:215.8px">-48.0</div>
<div class="a" style="left:290px;top:219.3px;width:3px;height:1.5px;background:#2c2c2c"></div>
<div class="yl" style="left:259.5px;top:234.0px">-50.0</div>
<div class="a" style="left:290px;top:237.5px;width:3px;height:1.5px;background:#2c2c2c"></div>
<div class="yl" style="left:259.5px;top:252.2px">-52.0</div>
<div class="a" style="left:290px;top:255.7px;width:3px;height:1.5px;background:#2c2c2c"></div>
<div class="yl" style="left:259.5px;top:270.4px">-54.0</div>
<div class="a" style="left:290px;top:273.9px;width:3px;height:1.5px;background:#2c2c2c"></div>
<div class="yl" style="left:259.5px;top:288.6px">-56.0</div>
<div class="a" style="left:290px;top:292.1px;width:3px;height:1.5px;background:#2c2c2c"></div>
<div class="yl" style="left:259.5px;top:306.8px">-58.0</div>
<div class="a" style="left:290px;top:310.3px;width:3px;height:1.5px;background:#2c2c2c"></div>
<div class="yl" style="left:259.5px;top:325.0px">-60.0</div>
<div class="a" style="left:290px;top:328.5px;width:3px;height:1.5px;background:#2c2c2c"></div>
<div class="yl" style="left:259.5px;top:343.2px">-62.0</div>
<div class="a" style="left:290px;top:346.7px;width:3px;height:1.5px;background:#2c2c2c"></div>
<div class="yl" style="left:259.5px;top:361.4px">-64.0</div>
<div class="a" style="left:290px;top:364.9px;width:3px;height:1.5px;background:#2c2c2c"></div>
<div class="yl" style="left:259.5px;top:379.7px">-66.0</div>
<div class="a" style="left:290px;top:383.2px;width:3px;height:1.5px;background:#2c2c2c"></div>
<div class="yl" style="left:259.5px;top:397.9px">-68.0</div>
<div class="a" style="left:290px;top:401.4px;width:3px;height:1.5px;background:#2c2c2c"></div>
<div class="yl" style="left:259.5px;top:416.1px">-70.0</div>
<div class="a" style="left:290px;top:419.6px;width:3px;height:1.5px;background:#2c2c2c"></div>
<div class="yl" style="left:259.5px;top:434.3px">-72.0</div>
<div class="a" style="left:290px;top:437.8px;width:3px;height:1.5px;background:#2c2c2c"></div>
<div class="yl" style="left:259.5px;top:452.5px">-74.0</div>
<div class="a" style="left:290px;top:456.0px;width:3px;height:1.5px;background:#2c2c2c"></div>
<div class="a" style="left:353.5px;top:458px;width:1.2px;height:3px;background:#2e2e2e"></div>
<div class="a" style="left:407.4px;top:458px;width:1.2px;height:3px;background:#2e2e2e"></div>
<div class="a" style="left:461.4px;top:458px;width:1.2px;height:3px;background:#2e2e2e"></div>
<div class="a" style="left:515.4px;top:458px;width:1.2px;height:3px;background:#2e2e2e"></div>
<div class="a" style="left:569.3px;top:458px;width:1.2px;height:3px;background:#2e2e2e"></div>
<div class="a" style="left:623.2px;top:458px;width:1.2px;height:3px;background:#2e2e2e"></div>
<div class="a" style="left:677.2px;top:458px;width:1.2px;height:3px;background:#2e2e2e"></div>
<div class="a" style="left:731.2px;top:458px;width:1.2px;height:3px;background:#2e2e2e"></div>
<div class="a" style="left:785.1px;top:458px;width:1.2px;height:3px;background:#2e2e2e"></div>
<div class="xl" style="left:274.0px;top:462.5px">2.40582G</div>
<div class="xl" style="left:334.0px;top:462.5px">2.4056G</div>
<div class="xl" style="left:387.9px;top:462.5px">2.4054G</div>
<div class="xl" style="left:441.9px;top:462.5px">2.4052G</div>
<div class="xl" style="left:495.9px;top:462.5px">2.405G</div>
<div class="xl" style="left:549.8px;top:462.5px">2.4048G</div>
<div class="xl" style="left:603.8px;top:462.5px">2.4046G</div>
<div class="xl" style="left:657.7px;top:462.5px">2.4044G</div>
<div class="xl" style="left:711.7px;top:462.5px">2.4042G</div>
<div class="xl" style="left:765.6px;top:462.5px">2.404G</div>
<div class="xl" style="left:814.0px;top:462.5px">2.40382G</div>
<div class="t" style="left:529px;top:473.5px">Frequency (Hz)</div>
<div class="t" style="left:228px;top:280px;width:76px;text-align:center;transform:rotate(-90deg)">Amplitude (dBm)</div>
<div class="a" style="left:250.5px;top:490px;width:126.5px;height:21.5px;background:#fff"></div>
<div class="a" style="left:254.5px;top:492px;width:6px;height:6px;background:#e4e4ea;border:1px solid #a8a8b0"></div><div class="a" style="left:256px;top:494.5px;width:3px;height:1px;background:#606070"></div>
<div class="a" style="left:262px;top:491.5px;width:9px;height:7px;background:#000"></div>
<div class="a" style="left:265.5px;top:491.5px;width:1.5px;height:7px;background:#b8104a"></div>
<div class="a" style="left:262px;top:494.5px;width:9px;height:1.5px;background:#b8104a"></div>
<div class="a" style="left:271px;top:490.5px;width:29.5px;height:9.5px;background:#ffff00;color:#202000;font-size:6.8px;line-height:9.5px;padding-left:2px;-webkit-text-stroke:0.15px #202000">Cursor 0</div>
<div class="a" style="left:283px;top:500.5px;color:#303030;font-size:6.6px;line-height:8px;white-space:nowrap;-webkit-text-stroke:0.15px #303030">RF spect</div>
<div class="a" style="left:266px;top:500.5px;color:#ececec;font-size:6px;line-height:8px;white-space:nowrap">Trace</div>
<div class="a" style="left:309px;top:490px;width:1px;height:21.5px;background:#e4e4e4"></div>
<div class="a" style="left:350px;top:490px;width:1px;height:21.5px;background:#e4e4e4"></div>
<div class="a" style="left:312px;top:500.5px;color:#303030;font-size:6.6px;line-height:8px;white-space:nowrap;-webkit-text-stroke:0.15px #303030">2.40501G</div>
<div class="a" style="left:353.5px;top:500.5px;color:#303030;font-size:6.6px;line-height:8px;white-space:nowrap;-webkit-text-stroke:0.15px #303030">-37.1</div>
<div class="a" style="left:379px;top:490.5px;width:33px;height:21px;background:linear-gradient(90deg,#bdbdbd,#dadada 40%,#d6d6d6 60%,#b8b8b8)"></div>
<svg class="a" style="left:386px;top:492px" width="20" height="20" viewBox="0 0 20 20"><g fill="none" stroke="#383838" stroke-width="1"><path d="M10 1 L19 10 L10 19 L1 10 Z"/><path d="M5.5 5.5 L14.5 14.5 M14.5 5.5 L5.5 14.5"/></g></svg></body></html>
